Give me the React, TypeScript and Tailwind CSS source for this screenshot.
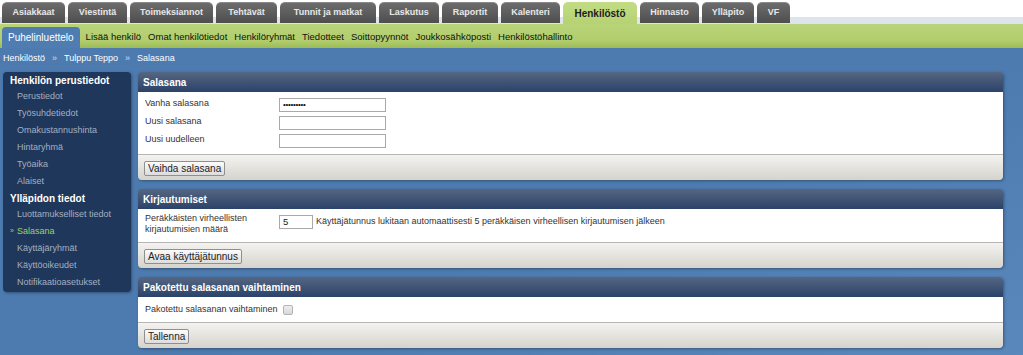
import React from "react";

const tabs = [
  { label: "Asiakkaat", w: "w-[63px]" },
  { label: "Viestintä", w: "w-[59px]" },
  { label: "Toimeksiannot", w: "w-[83px]" },
  { label: "Tehtävät", w: "w-[61px]" },
  { label: "Tunnit ja matkat", w: "w-[96px]" },
  { label: "Laskutus", w: "w-[60px]" },
  { label: "Raportit", w: "w-[56px]" },
  { label: "Kalenteri", w: "w-[59px]" },
  { label: "Henkilöstö", w: "w-[74px]", active: true },
  { label: "Hinnasto", w: "w-[59px]" },
  { label: "Ylläpito", w: "w-[52px]" },
  { label: "VF", w: "w-[33px]" },
];

const subnav = [
  "Lisää henkilö",
  "Omat henkilötiedot",
  "Henkilöryhmät",
  "Tiedotteet",
  "Soittopyynnöt",
  "Joukkosähköposti",
  "Henkilöstöhallinto",
];

function Button({ children }: { children: React.ReactNode }) {
  return (
    <button className="h-[15px] px-[3px] border border-[#8f8f8f] rounded-[2px] bg-[linear-gradient(to_bottom,#fcfcfc,#dcdcdc)] text-[10px] leading-[13px] text-[#222]">
      {children}
    </button>
  );
}

function Panel({
  title,
  children,
  button,
  bodyClass,
}: {
  title: string;
  children: React.ReactNode;
  button: string;
  bodyClass: string;
}) {
  return (
    <div className="rounded-[4px] shadow-[1px_1px_3px_rgba(0,0,0,0.35)]">
      <div className="h-[20px] px-[5px] flex items-center rounded-t-[4px] bg-[linear-gradient(to_bottom,#566682,#2b4269)] text-white font-bold text-[10px]">
        {title}
      </div>
      <div className={"bg-white px-[7px] " + bodyClass}>{children}</div>
      <div className="h-[26px] flex items-start border-t border-[#b5b5b5] rounded-b-[4px] bg-[linear-gradient(to_bottom,#f4f3f0,#d6d3cc)] px-[6px] pt-[6px]">
        <Button>{button}</Button>
      </div>
    </div>
  );
}

export default function App() {
  const sideTop = [
    "Perustiedot",
    "Työsuhdetiedot",
    "Omakustannushinta",
    "Hintaryhmä",
    "Työaika",
    "Alaiset",
  ];
  const sideBottom = [
    { label: "Luottamukselliset tiedot" },
    { label: "Salasana", active: true },
    { label: "Käyttäjäryhmät" },
    { label: "Käyttöoikeudet" },
    { label: "Notifikaatioasetukset" },
  ];

  return (
    <div className="w-[1023px] h-[355px] overflow-hidden bg-[linear-gradient(160deg,#4d7bb0_60%,#5a88bd)] font-['Liberation_Sans',Arial,sans-serif]">
      {/* top tabs */}
      <div className="h-[24px] flex gap-[3px] pl-[2px] pt-[2px] bg-[linear-gradient(to_bottom,#ffffff_17px,#dde4ec_17px)]">
        {tabs.map((t) =>
          t.active ? (
            <div
              key={t.label}
              className={
                t.w +
                " h-[22px] rounded-t-[5px] bg-[linear-gradient(to_bottom,#c3dc86,#b6d272)] flex items-center justify-center text-[10px] font-bold text-[#1c1c1c]"
              }
            >
              {t.label}
            </div>
          ) : (
            <div
              key={t.label}
              className={
                t.w +
                " h-[21px] rounded-t-[5px] border-t border-[#8a8a8a] bg-[linear-gradient(to_bottom,#6c6c6c,#4e4e4e)] flex items-center justify-center text-[9px] font-bold text-[#e8e8e8]"
              }
            >
              {t.label}
            </div>
          )
        )}
      </div>

      {/* green sub navigation */}
      <div className="h-[24px] flex items-end pl-[2px] bg-[linear-gradient(to_bottom,#b9d479,#b1cd6c_70%,#9dba58)]">
        <div className="h-[21px] px-[6px] flex items-center rounded-t-[4px] bg-[#4f7db2] text-white text-[10px]">
          Puhelinluettelo
        </div>
        <div className="h-[21px] flex items-center gap-[7px] pl-[6px] text-[9.5px] text-[#111]">
          {subnav.map((s) => (
            <span key={s}>{s}</span>
          ))}
        </div>
      </div>

      {/* breadcrumb */}
      <div className="h-[22px] flex items-center pl-[3px] text-[9px] text-white">
        <span>Henkilöstö</span>
        <span className="mx-[7px] text-[#cfdbe9]">»</span>
        <span>Tulppu Teppo</span>
        <span className="mx-[7px] text-[#cfdbe9]">»</span>
        <span>Salasana</span>
      </div>

      <div className="flex gap-[7px] pl-[3px] pt-[2px]">
        {/* sidebar */}
        <div className="w-[128px] self-start rounded-[4px] bg-[#1f375a] pb-[1px] shadow-[1px_1px_3px_rgba(0,0,0,0.35)]">
          <div className="h-[16px] flex items-center pl-[7px] text-white font-bold text-[10px]">
            Henkilön perustiedot
          </div>
          {sideTop.map((s) => (
            <div key={s} className="h-[17px] flex items-center pl-[14px] text-[9px] text-[#a2b0c4]">
              {s}
            </div>
          ))}
          <div className="h-[16px] flex items-center pl-[7px] text-white font-bold text-[10px]">
            Ylläpidon tiedot
          </div>
          {sideBottom.map((s) =>
            s.active ? (
              <div key={s.label} className="h-[17px] flex items-center pl-[7px] text-[9px] text-[#9fd06a]">
                <span className="w-[7px] text-[7px]">»</span>
                {s.label}
              </div>
            ) : (
              <div key={s.label} className="h-[17px] flex items-center pl-[14px] text-[9px] text-[#a2b0c4]">
                {s.label}
              </div>
            )
          )}
        </div>

        {/* panels */}
        <div className="w-[865px] flex flex-col gap-[9px]">
          <Panel title="Salasana" button="Vaihda salasana" bodyClass="py-[4px]">
            {[
              { l: "Vanha salasana", v: "•••••••••" },
              { l: "Uusi salasana", v: "" },
              { l: "Uusi uudelleen", v: "" },
            ].map((r) => (
              <div key={r.l} className="h-[18px] flex items-center">
                <span className="w-[134px] text-[9px] text-[#333] -mt-[3px]">{r.l}</span>
                <div className="w-[107px] h-[14px] border border-[#a9a9a9] bg-white pl-[3px] flex items-center text-[8px] tracking-[-0.3px] text-[#111]">
                  {r.v}
                </div>
              </div>
            ))}
          </Panel>

          <Panel title="Kirjautumiset" button="Avaa käyttäjätunnus" bodyClass="pt-[4px] pb-[7px]">
            <div className="flex items-start">
              <div className="w-[134px] text-[9px] leading-[11px] text-[#333]">
                Peräkkäisten virheellisten
                <br />
                kirjautumisien määrä
              </div>
              <div className="mt-[2px] w-[34px] h-[14px] border border-[#a9a9a9] bg-white pl-[3px] flex items-center text-[9.5px] text-[#222]">
                5
              </div>
              <span className="ml-[3px] mt-[3px] text-[9px] leading-[11px] text-[#333]">
                Käyttäjätunnus lukitaan automaattisesti 5 peräkkäisen virheellisen kirjautumisen jälkeen
              </span>
            </div>
          </Panel>

          <Panel title="Pakotettu salasanan vaihtaminen" button="Tallenna" bodyClass="pt-[4px] pb-[4px]">
            <div className="h-[17px] flex items-center">
              <span className="w-[134px] text-[9px] text-[#333]">Pakotettu salasanan vaihtaminen</span>
              <span className="ml-[4px] w-[10px] h-[10px] border border-[#b3b3b3] rounded-[2px] bg-[linear-gradient(to_bottom,#eeeeee,#d8d8d8)]" />
            </div>
          </Panel>
        </div>
      </div>
    </div>
  );
}
